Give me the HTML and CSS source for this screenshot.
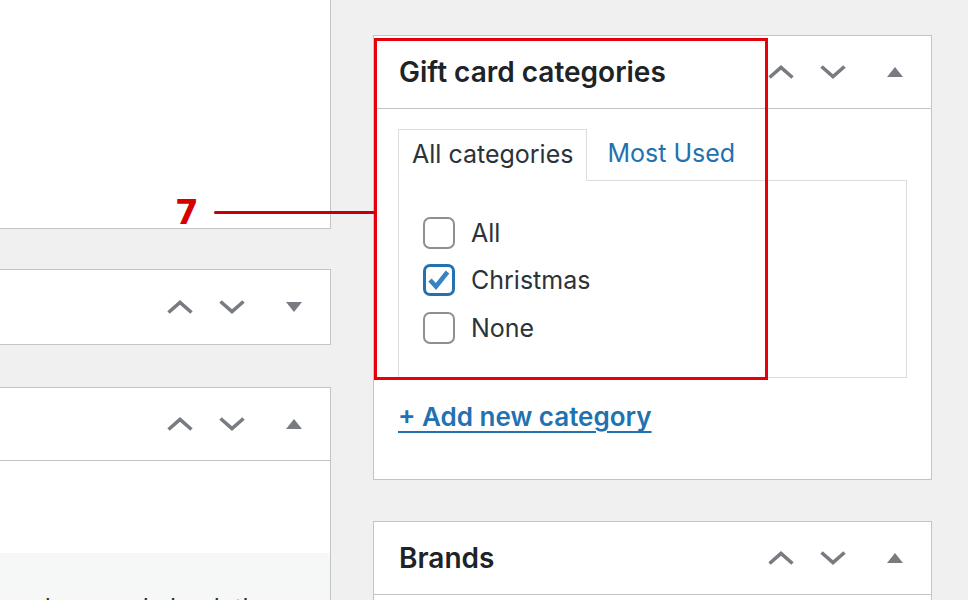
FILE: index.html
```html
<!DOCTYPE html>
<html lang="en">
<head>
<meta charset="utf-8">
<title>Gift card categories</title>
<link rel="stylesheet" href="styles.css">
</head>
<body>
<div class="page">
  <div class="col col-left">
    <section class="box box-top"></section>

    <section class="box closed">
      <div class="box-header">
        <h2 class="box-title"></h2>
        <div class="actions">
          <span class="btn btn-move"><svg width="26" height="14" viewBox="0 0 26 14"><polyline points="1.5,12.5 13,2.5 24.5,12.5" fill="none" stroke="#787c82" stroke-width="3.6"/></svg></span>
          <span class="btn btn-move"><svg width="26" height="14" viewBox="0 0 26 14"><polyline points="1.5,1.5 13,11.5 24.5,1.5" fill="none" stroke="#787c82" stroke-width="3.6"/></svg></span>
          <span class="btn btn-toggle"><svg width="16" height="10" viewBox="0 0 16 10"><polygon points="0,0 16,0 8,10" fill="#787c82"/></svg></span>
        </div>
      </div>
    </section>

    <section class="box">
      <div class="box-header">
        <h2 class="box-title"></h2>
        <div class="actions">
          <span class="btn btn-move"><svg width="26" height="14" viewBox="0 0 26 14"><polyline points="1.5,12.5 13,2.5 24.5,12.5" fill="none" stroke="#787c82" stroke-width="3.6"/></svg></span>
          <span class="btn btn-move"><svg width="26" height="14" viewBox="0 0 26 14"><polyline points="1.5,1.5 13,11.5 24.5,1.5" fill="none" stroke="#787c82" stroke-width="3.6"/></svg></span>
          <span class="btn btn-toggle"><svg width="16" height="10" viewBox="0 0 16 10"><polygon points="0,10 8,0 16,10" fill="#787c82"/></svg></span>
        </div>
      </div>
      <div class="box-blank"></div>
      <div class="box-foot"><p>are here and check the ones below.</p></div>
    </section>
  </div>

  <div class="col col-right">
    <section class="box">
      <div class="box-header">
        <h2 class="box-title">Gift card categories</h2>
        <div class="actions">
          <span class="btn btn-move"><svg width="26" height="14" viewBox="0 0 26 14"><polyline points="1.5,12.5 13,2.5 24.5,12.5" fill="none" stroke="#787c82" stroke-width="3.6"/></svg></span>
          <span class="btn btn-move"><svg width="26" height="14" viewBox="0 0 26 14"><polyline points="1.5,1.5 13,11.5 24.5,1.5" fill="none" stroke="#787c82" stroke-width="3.6"/></svg></span>
          <span class="btn btn-toggle"><svg width="16" height="10" viewBox="0 0 16 10"><polygon points="0,10 8,0 16,10" fill="#787c82"/></svg></span>
        </div>
      </div>
      <div class="box-body">
        <ul class="tabs">
          <li class="tab active">All categories</li>
          <li class="tab"><a href="#">Most Used</a></li>
        </ul>
        <div class="panel">
          <ul class="checklist">
            <li class="check-row"><span class="checkbox"></span><span class="check-label">All</span></li>
            <li class="check-row"><span class="checkbox checked"><svg width="26" height="26" viewBox="0 0 26 26"><polyline points="4,13 10,19.5 21.5,5" fill="none" stroke="#3582c4" stroke-width="4.5"/></svg></span><span class="check-label">Christmas</span></li>
            <li class="check-row"><span class="checkbox"></span><span class="check-label">None</span></li>
          </ul>
        </div>
        <a class="add-link" href="#">+ Add new category</a>
      </div>
    </section>

    <section class="box box-brands">
      <div class="box-header">
        <h2 class="box-title">Brands</h2>
        <div class="actions">
          <span class="btn btn-move"><svg width="26" height="14" viewBox="0 0 26 14"><polyline points="1.5,12.5 13,2.5 24.5,12.5" fill="none" stroke="#787c82" stroke-width="3.6"/></svg></span>
          <span class="btn btn-move"><svg width="26" height="14" viewBox="0 0 26 14"><polyline points="1.5,1.5 13,11.5 24.5,1.5" fill="none" stroke="#787c82" stroke-width="3.6"/></svg></span>
          <span class="btn btn-toggle"><svg width="16" height="10" viewBox="0 0 16 10"><polygon points="0,10 8,0 16,10" fill="#787c82"/></svg></span>
        </div>
      </div>
      <div class="box-blank"></div>
    </section>
  </div>

  <div class="callout-frame"></div>
  <div class="callout-line"></div>
  <div class="callout-num">7</div>
</div>
</body>
</html>
```

FILE: styles.css
```css
html, body {
  margin: 0;
  padding: 0;
}
body {
  background: #f0f0f1;
  font-family: Inter, Roboto, "Liberation Sans", sans-serif;
  color: #2c3338;
  height: 600px;
  overflow: hidden;
}
.page {
  position: relative;
  display: grid;
  grid-template-columns: 331px 559px;
  column-gap: 42px;
  align-items: start;
  height: 600px;
  overflow: hidden;
}
.col {
  display: flex;
  flex-direction: column;
}
.col-right {
  padding-top: 35px;
}
.box {
  background: #fff;
  border: 1px solid #c3c4c7;
}
.col-left .box {
  border-left: none;
}
.box-top {
  height: 228px;
  border-top: none;
}
.closed {
  margin-top: 40px;
}
.closed + .box {
  margin-top: 42px;
}
.box-header {
  display: flex;
  align-items: center;
  height: 72px;
  border-bottom: 1px solid #c3c4c7;
}
.closed .box-header {
  height: 74px;
  border-bottom: none;
}
.box-title {
  flex: 1;
  margin: 0;
  padding-left: 25px;
  font-size: 28px;
  font-weight: 600;
  color: #1d2327;
}
.actions {
  display: flex;
  align-items: center;
  height: 100%;
}
.btn {
  display: flex;
  align-items: center;
  justify-content: center;
  height: 100%;
}
.btn svg {
  display: block;
}
.btn-move {
  width: 52px;
}
.btn-toggle {
  width: 72px;
}
.box-blank {
  height: 92px;
}
.box-foot {
  background: #f6f7f7;
  height: 60px;
  overflow: hidden;
}
.box-foot p {
  margin: 0;
  padding-top: 37px;
  font-size: 25px;
  line-height: 36px;
  white-space: nowrap;
  color: #2c3338;
}
.box-body {
  padding: 20px 24px 47px 24px;
}
.tabs {
  display: flex;
  margin: 0;
  padding: 0;
  list-style: none;
}
.tab {
  height: 50px;
  line-height: 48px;
  font-size: 25px;
  padding: 0 0 0 20px;
}
.tab.active {
  position: relative;
  z-index: 1;
  border: 1px solid #dcdcde;
  border-bottom: 1px solid #fff;
  padding: 0 13px;
  margin-bottom: -1px;
  color: #2c3338;
}
.tab a {
  color: #2271b1;
  text-decoration: none;
}
.panel {
  border: 1px solid #dcdcde;
  height: 198px;
  padding: 28px 24px 0 24px;
  box-sizing: border-box;
}
.checklist {
  margin: 0;
  padding: 0;
  list-style: none;
}
.check-row {
  display: flex;
  align-items: center;
  height: 47.5px;
}
.checkbox {
  display: flex;
  align-items: center;
  justify-content: center;
  box-sizing: border-box;
  width: 32px;
  height: 32px;
  border: 2px solid #8c8f94;
  border-radius: 7px;
  background: #fff;
  margin-right: 16px;
}
.checkbox.checked {
  border: 3px solid #2271b1;
}
.check-label {
  font-size: 25px;
  color: #2c3338;
}
.add-link {
  display: inline-block;
  margin-top: 23px;
  font-size: 26px;
  font-weight: 600;
  color: #2271b1;
  text-decoration: underline;
  text-underline-offset: 5px;
  text-decoration-thickness: 2px;
}
.box-brands {
  margin-top: 41px;
}
.callout-frame {
  position: absolute;
  left: 374px;
  top: 38px;
  width: 394px;
  height: 342px;
  box-sizing: border-box;
  border: 3px solid #e5000b;
}
.callout-line {
  position: absolute;
  left: 214px;
  top: 211px;
  width: 161px;
  height: 3px;
  border-radius: 2px;
  background: #c3000a;
}
.callout-num {
  position: absolute;
  left: 175px;
  top: 192px;
  font-family: "DejaVu Sans", sans-serif;
  font-size: 34px;
  font-weight: 700;
  line-height: 40px;
  color: #d60000;
}
```
